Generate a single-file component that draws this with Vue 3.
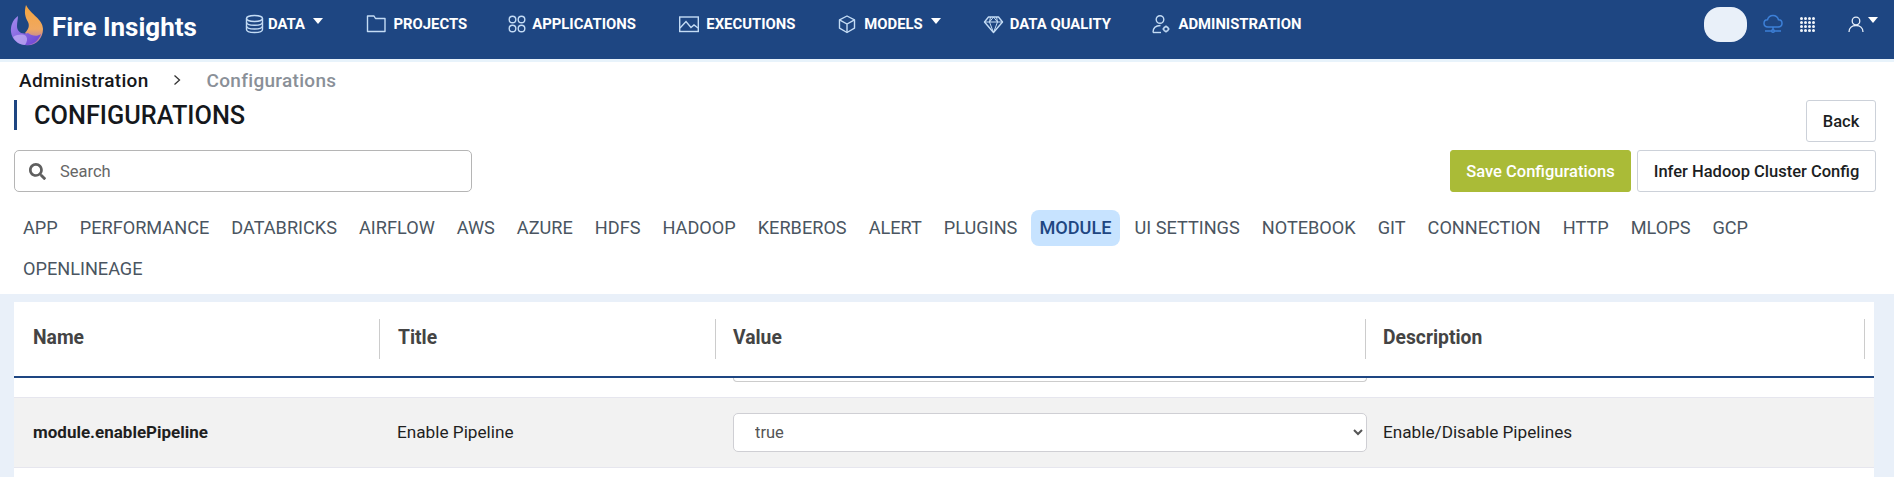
<script setup>
const navItems = [
  { label: 'DATA', icon: 'data', caret: true, gap: 44 },
  { label: 'PROJECTS', icon: 'projects', gap: 40 },
  { label: 'APPLICATIONS', icon: 'applications', gap: 45.5 },
  { label: 'EXECUTIONS', icon: 'executions', gap: 44 },
  { label: 'MODELS', icon: 'models', caret: true, gap: 44 },
  { label: 'DATA QUALITY', icon: 'quality', gap: 42.5 },
  { label: 'ADMINISTRATION', icon: 'admin', gap: 0 }
]

const tabs = [
  'APP', 'PERFORMANCE', 'DATABRICKS', 'AIRFLOW', 'AWS', 'AZURE', 'HDFS', 'HADOOP', 'KERBEROS',
  'ALERT', 'PLUGINS', 'MODULE', 'UI SETTINGS', 'NOTEBOOK', 'GIT', 'CONNECTION', 'HTTP', 'MLOPS',
  'GCP', 'OPENLINEAGE'
]

const columns = ['Name', 'Title', 'Value', 'Description']
</script>

<template>
  <div class="page">
    <header class="topbar">
      <div class="brand">
        <svg class="logo" width="52" height="60" viewBox="0 0 52 60">
          <defs>
            <linearGradient id="flameTop" x1="0" y1="0" x2="0" y2="1">
              <stop offset="0" stop-color="#f5a53f" />
              <stop offset="0.6" stop-color="#f0a860" />
              <stop offset="1" stop-color="#9a6cc8" />
            </linearGradient>
            <linearGradient id="flameBody" x1="0" y1="0" x2="1" y2="1">
              <stop offset="0" stop-color="#a48df0" />
              <stop offset="1" stop-color="#6a3fd0" />
            </linearGradient>
          </defs>
          <path d="M26 5C24 12 25 17 28 22C30 26 28 30 25 33C29 36 28 42 25 45C35 47 43 39 43 29C43 19 31 15 26 5Z" fill="url(#flameTop)" />
          <path d="M18 16C12 20 10.500 27 11 32C12 40 19 46 28 45C34 44 39 40 41 34C37 37 32 36 28 33C21 35 17 31 17 26C17 22 18 19 18 16Z" fill="url(#flameBody)" />
          <path d="M13 37C18 34 23 34 26 36C28 39 27 42 25 45C19 45 15 41 13 37Z" fill="#c5b4f5" opacity="0.7" />
        </svg>
        <span class="brand-name">Fire Insights</span>
      </div>

      <nav class="nav">
        <a v-for="item in navItems" :key="item.label" class="nav-item" :style="{ marginRight: item.gap + 'px' }">
          <svg class="nav-icon" width="20" height="20" viewBox="0 0 20 20" fill="none" stroke="#c4dcf5" stroke-width="1.400">
            <template v-if="item.icon === 'data'">
              <ellipse cx="11.500" cy="4.500" rx="8" ry="3" />
              <path d="M3.500 4.500V15.500C3.500 17.200 7 18.500 11.500 18.500C16 18.500 19.500 17.200 19.500 15.500V4.500" />
              <path d="M3.500 8.200C3.500 9.900 7 11.200 11.500 11.200C16 11.200 19.500 9.900 19.500 8.200" />
              <path d="M3.500 12C3.500 13.700 7 15 11.500 15C16 15 19.500 13.700 19.500 12" />
            </template>
            <template v-else-if="item.icon === 'projects'">
              <path d="M0.500 17.500V2H7L8.500 4.500H18V17.500Z" stroke-linejoin="round" />
            </template>
            <template v-else-if="item.icon === 'applications'">
              <circle cx="5.500" cy="5.500" r="3.300" />
              <circle cx="14.500" cy="5.500" r="3.300" />
              <circle cx="5.500" cy="14.500" r="3.300" />
              <circle cx="14.500" cy="14.500" r="3.300" />
            </template>
            <template v-else-if="item.icon === 'executions'">
              <rect x="-1.300" y="3" width="18.600" height="14.500" />
              <path d="M-1 14L5 7.500L10 13.500L13 11L17 14" />
            </template>
            <template v-else-if="item.icon === 'models'">
              <path d="M8 2L15.500 5.800V14.200L8 18.500L0.500 14.200V5.800Z" stroke-linejoin="round" />
              <path d="M0.500 5.800L8 10L15.500 5.800M8 10V18.500" />
            </template>
            <template v-else-if="item.icon === 'quality'">
              <path d="M3.500 3H13.500L17.500 8L8.500 18.500L-0.500 8Z" stroke-linejoin="round" />
              <path d="M-0.500 8H17.500M5.500 3L4.500 8L8.500 18.500L12.500 8L11.500 3M4.500 8L8.500 3L12.500 8" stroke-width="1" />
            </template>
            <template v-else>
              <circle cx="7" cy="5.500" r="3.800" />
              <path d="M0 18.500C0 14 3 11.500 7.500 11.500" />
              <path d="M0 18.500H8" />
              <circle cx="13" cy="15" r="2.300" />
              <path d="M13 11.500V12.700M13 17.300V18.500M9.500 15H10.700M15.300 15H16.500" />
            </template>
          </svg>
          <span :class="{ 'label-wide': item.icon === 'projects' }">{{ item.label }}</span>
          <i v-if="item.caret" class="caret"></i>
        </a>
      </nav>

      <div class="top-right">
        <div class="pill"></div>
        <svg class="cloud" width="20" height="20" viewBox="0 0 20 20" fill="none" stroke="#3d80d8" stroke-width="1.500">
          <path d="M5 13C2.500 13 1 11.300 1 9.300C1 7.300 2.500 5.800 4.500 5.800C5.200 3.300 7.300 1.500 10 1.500C12.700 1.500 14.800 3.300 15.500 5.800C17.500 5.800 19 7.300 19 9.300C19 11.300 17.500 13 15 13Z" />
          <path d="M10 13V16" />
          <circle cx="10" cy="17" r="1.300" />
          <path d="M2 17H8.500M11.500 17H18" />
        </svg>
        <div class="apps">
          <i v-for="n in 16" :key="n"></i>
        </div>
        <svg class="user" width="16" height="16" viewBox="0 0 16 16" fill="none" stroke="#e6eef8" stroke-width="1.300">
          <circle cx="8" cy="5" r="3.800" />
          <path d="M1 16C1 12 4 9.500 8 9.500C12 9.500 15 12 15 16" />
        </svg>
        <i class="caret"></i>
      </div>
    </header>
    <div class="strip"></div>

    <main class="main">
      <div class="crumbs">
        <span class="crumb-link">Administration</span>
        <svg class="crumb-sep" width="8" height="12" viewBox="0 0 8 12" fill="none" stroke="#333" stroke-width="1.300">
          <path d="M1.500 1.500L6.500 6L1.500 10.500" />
        </svg>
        <span class="crumb-current">Configurations</span>
      </div>

      <div class="title-row">
        <h1 class="title">CONFIGURATIONS</h1>
        <button class="btn">Back</button>
      </div>

      <div class="tool-row">
        <label class="search">
          <svg width="17" height="17" viewBox="0 0 512 512" fill="#5f5f5f">
            <path d="M505 442.700L405.300 343c-4.500-4.500-10.600-7-17-7H372c27.600-35.300 44-79.700 44-128C416 93.100 322.900 0 208 0S0 93.100 0 208s93.100 208 208 208c48.300 0 92.700-16.400 128-44v16.300c0 6.400 2.500 12.500 7 17l99.700 99.700c9.400 9.400 24.600 9.400 33.900 0l28.300-28.300c9.400-9.400 9.400-24.600.1-34zM208 336c-70.700 0-128-57.200-128-128 0-70.700 57.200-128 128-128 70.700 0 128 57.200 128 128 0 70.700-57.200 128-128 128z" />
          </svg>
          <input type="text" placeholder="Search" />
        </label>
        <div class="tool-actions">
          <button class="btn btn-save">Save Configurations</button>
          <button class="btn">Infer Hadoop Cluster Config</button>
        </div>
      </div>

      <div class="tabs">
        <span v-for="tab in tabs" :key="tab" class="tab" :class="{ active: tab === 'MODULE' }">{{ tab }}</span>
      </div>
    </main>

    <section class="content">
      <div class="card">
        <div class="table-head">
          <div v-for="col in columns" :key="col" class="head-cell">{{ col }}</div>
        </div>
        <div class="table-body">
          <div class="row row-clipped">
            <div></div>
            <div></div>
            <div class="cell-value"><div class="select-stub"></div></div>
            <div></div>
          </div>
          <div class="row row-striped">
            <div class="cell-name">module.enablePipeline</div>
            <div class="cell-title">Enable Pipeline</div>
            <div class="cell-value">
              <select class="value-select">
                <option>true</option>
                <option>false</option>
              </select>
            </div>
            <div class="cell-desc">Enable/Disable Pipelines</div>
          </div>
        </div>
      </div>
    </section>
  </div>
</template>

<style>
html,
body {
  margin: 0;
  background: #fff;
  overflow: hidden;
}
</style>

<style scoped>
.page {
  width: 1894px;
  height: 477px;
  display: flex;
  flex-direction: column;
  overflow: hidden;
  font-family: Roboto, "Liberation Sans", sans-serif;
  color: #212529;
}

.topbar {
  height: 59px;
  flex: none;
  display: flex;
  align-items: flex-start;
  background: #1e4682;
}

.brand {
  width: 243px;
  height: 59px;
  flex: none;
  display: flex;
  align-items: flex-start;
}

.logo {
  flex: none;
}

.brand-name {
  margin-top: 12px;
  font-size: 26px;
  line-height: 30px;
  font-weight: 700;
  color: #fff;
  white-space: nowrap;
}

.nav {
  display: flex;
  align-items: center;
  height: 48px;
}

.nav-item {
  display: flex;
  align-items: center;
  gap: 5px;
  font-size: 14.850px;
  font-weight: 700;
  color: #fff;
  white-space: nowrap;
}

.label-wide {
  margin-left: 1.500px;
}

.nav-icon {
  flex: none;
  overflow: visible;
}

.caret {
  display: block;
  width: 0;
  height: 0;
  margin: -6px 0 0 3px;
  border-left: 5px solid transparent;
  border-right: 5px solid transparent;
  border-top: 6px solid #fff;
}

.top-right {
  margin-left: auto;
  display: flex;
  align-items: center;
  height: 48px;
  padding-right: 16px;
}

.pill {
  width: 43px;
  height: 35px;
  border-radius: 16px;
  background: #e9f0f9;
}

.cloud {
  margin-left: 16px;
}

.apps {
  margin-left: 17px;
  display: grid;
  grid-template-columns: repeat(4, 3px);
  gap: 1px;
}

.apps i {
  width: 3px;
  height: 3px;
  border-radius: 50%;
  background: #f2f6fb;
  display: block;
}

.user {
  margin-left: 33px;
}

.top-right .caret {
  margin: -8px 0 0 4px;
}

.strip {
  height: 3px;
  flex: none;
  background: #e8f3fb;
}

.main {
  flex: none;
  height: 232px;
  box-sizing: border-box;
  padding: 0 18px 0 14px;
}

.crumbs {
  display: flex;
  align-items: center;
  height: 38px;
  box-sizing: border-box;
  padding: 0 0 2px 5px;
  font-size: 19px;
  font-weight: 500;
  letter-spacing: 0.3px;
}

.crumb-link {
  color: #15171a;
}

.crumb-sep {
  margin-left: 24px;
}

.crumb-current {
  margin-left: 26px;
  color: #8a9098;
}

.title-row {
  display: flex;
  justify-content: space-between;
  align-items: flex-start;
  height: 50px;
}

.title {
  margin: 0;
  height: 30px;
  line-height: 31px;
  padding-left: 17px;
  border-left: 3px solid #1e4682;
  font-size: 25.300px;
  font-weight: 500;
  color: #15181c;
}

.tool-row {
  display: flex;
  justify-content: space-between;
  align-items: flex-start;
  height: 42px;
}

.search {
  width: 458px;
  height: 42px;
  box-sizing: border-box;
  display: flex;
  align-items: center;
  gap: 14px;
  padding-left: 14px;
  border: 1px solid #b5b5b5;
  border-radius: 5px;
}

.search input {
  flex: 1;
  min-width: 0;
  padding: 0;
  border: none;
  outline: none;
  font-family: inherit;
  font-size: 16.500px;
  color: #555;
}

.search input::placeholder {
  color: #666;
  opacity: 1;
}

.tool-actions {
  display: flex;
  gap: 6px;
}

.btn {
  height: 42px;
  box-sizing: border-box;
  padding: 0;
  background: #fff;
  border: 1px solid #ccd1d9;
  border-radius: 3px;
  font-family: inherit;
  font-size: 16.500px;
  font-weight: 500;
  color: #1b1e22;
  white-space: nowrap;
}

.title-row .btn {
  width: 70px;
}

.btn-save {
  width: 181px;
  background: #aabb37;
  border-color: #aabb37;
  color: #fff;
}

.tool-actions .btn:last-child {
  width: 239px;
}

.tabs {
  display: flex;
  flex-wrap: wrap;
  margin-top: 18px;
}

.tab {
  display: block;
  height: 36px;
  line-height: 36px;
  margin-bottom: 5px;
  padding: 0 9px;
  margin-right: 4px;
  font-size: 18.150px;
  color: #4a5561;
  border-radius: 8px;
  white-space: nowrap;
}

.tab.active {
  margin-left: 1px;
  margin-right: 6px;
  padding: 0 8px;
  background: #c7e3ff;
  color: #1e4682;
  font-weight: 500;
}

.content {
  flex: 1;
  min-height: 0;
  box-sizing: border-box;
  padding: 8px 20px 0 14px;
  background: #e9f0f9;
}

.card {
  height: 100%;
  background: #fff;
}

.table-head,
.row {
  display: grid;
  grid-template-columns: 366px 336px 650px 499px 9px;
}

.table-head {
  height: 76px;
  box-sizing: border-box;
  border-bottom: 2px solid #1e4682;
  padding-top: 17px;
  align-items: start;
}

.head-cell {
  height: 40px;
  line-height: 37px;
  box-sizing: border-box;
  padding-left: 17px;
  border-right: 1px solid #ccc;
  font-size: 19.300px;
  font-weight: 700;
  color: #444;
}

.head-cell:first-child {
  padding-left: 19px;
}

.head-cell:nth-child(2) {
  padding-left: 18px;
}

.table-body {
  overflow: hidden;
}

.row-clipped {
  height: 19px;
  overflow: hidden;
  border-bottom: 1px solid #e6e6ee;
  box-sizing: content-box;
}

.select-stub {
  height: 3px;
  margin-right: -1px;
  border: 1px solid #ccc;
  border-top: none;
  border-radius: 0 0 5px 5px;
}

.row-striped {
  height: 69px;
  background: #f2f2f2;
  border-bottom: 1px solid #e6e6ee;
  align-items: center;
  font-size: 17.200px;
  color: #1f1f1f;
  box-sizing: content-box;
}

.cell-name {
  padding: 0 0 2px 19px;
  font-size: 17px;
  font-weight: 700;
}

.cell-title {
  padding: 0 0 2px 17px;
}

.cell-value {
  padding-left: 17px;
}

.cell-desc {
  padding: 0 0 2px 17px;
}

.value-select {
  display: block;
  width: calc(100% + 1px);
  height: 39px;
  box-sizing: border-box;
  padding-left: 17px;
  background: #fff;
  border: 1px solid #cfcfd4;
  border-radius: 5px;
  font-family: inherit;
  font-size: 16.500px;
  color: #555;
}
</style>
